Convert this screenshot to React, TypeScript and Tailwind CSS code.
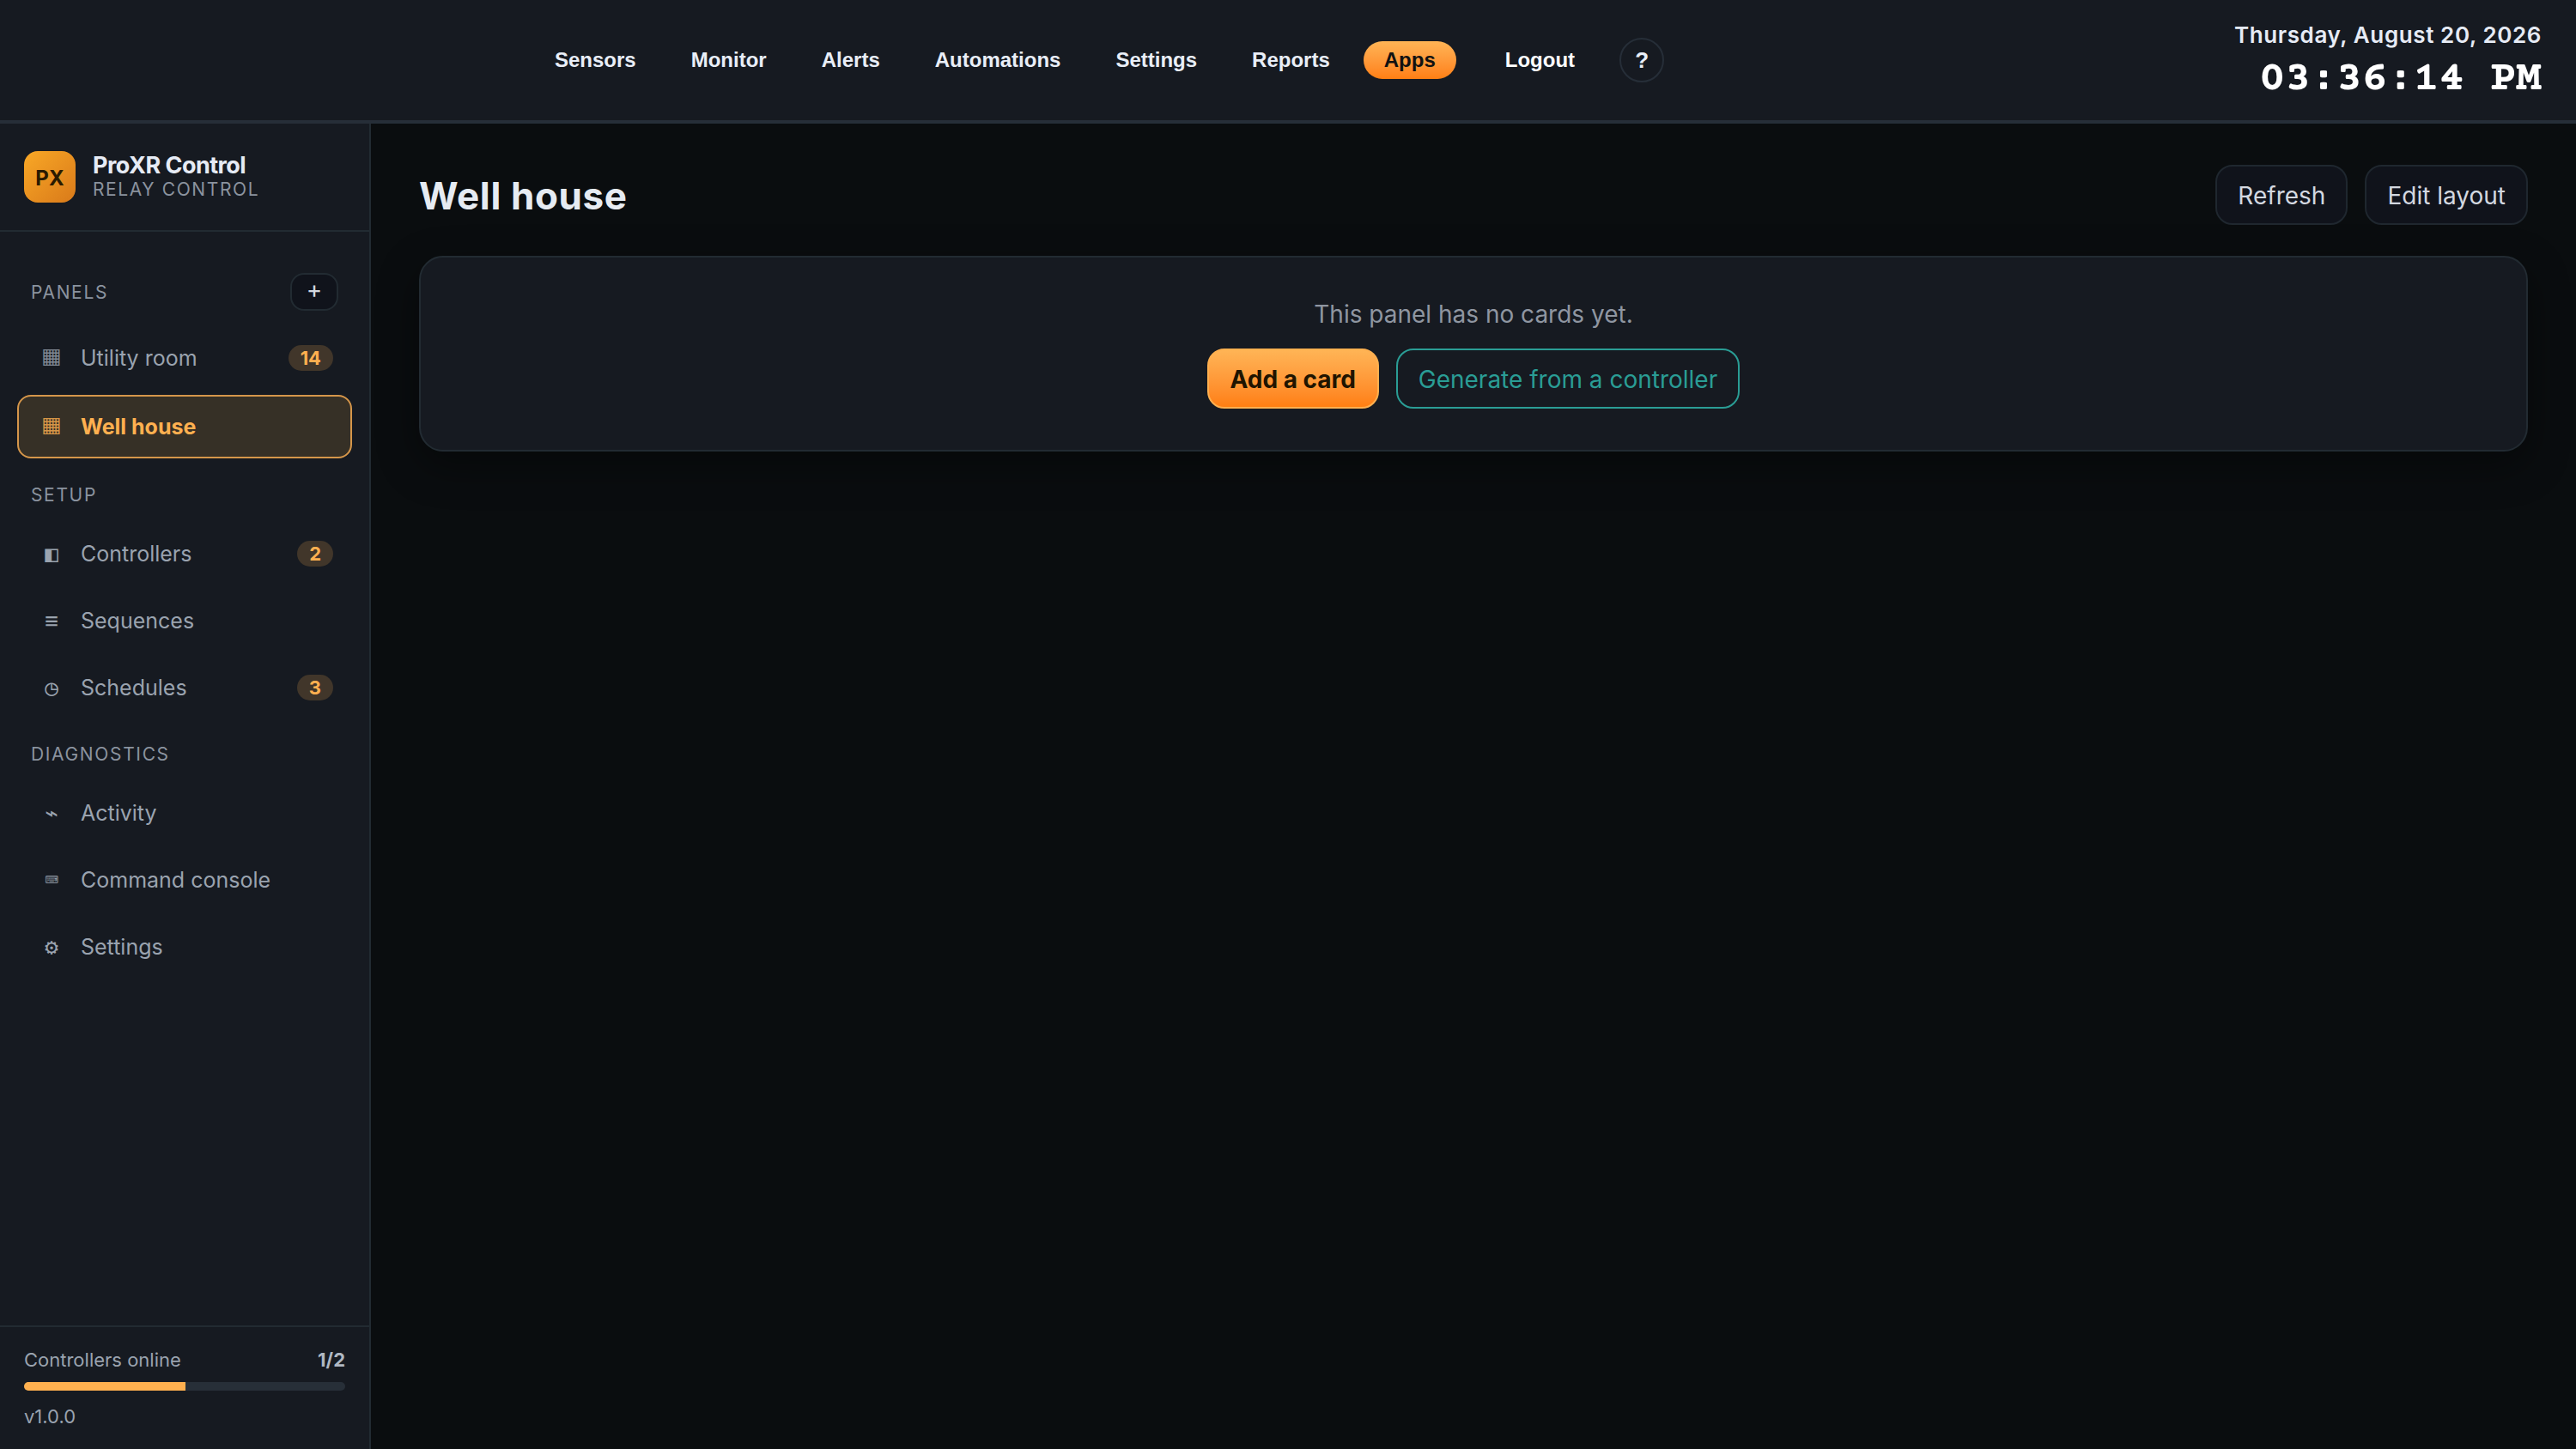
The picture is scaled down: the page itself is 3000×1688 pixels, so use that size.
const navLinks = ['Sensors', 'Monitor', 'Alerts', 'Automations', 'Settings', 'Reports', 'Apps'];

type Item = {
  icon: string;
  label: string;
  badge?: number;
  wide?: boolean;
};

const panels: Item[] = [
  { icon: '▦', label: 'Utility room', badge: 14, wide: true },
  { icon: '▦', label: 'Well house', wide: true },
];

const setup: Item[] = [
  { icon: '◧', label: 'Controllers', badge: 2 },
  { icon: '≡', label: 'Sequences' },
  { icon: '◷', label: 'Schedules', badge: 3 },
];

const diagnostics: Item[] = [
  { icon: '⌁', label: 'Activity' },
  { icon: '⌨', label: 'Command console' },
  { icon: '⚙', label: 'Settings' },
];

function TopBar() {
  return (
    <header className="flex h-36 shrink-0 items-center justify-between border-b-4 border-[#262e38] bg-[#161a21] pr-10 pl-[622px]">
      <nav className="flex items-center font-['Liberation_Sans',sans-serif] text-[24px] font-bold text-[#e9eef7]">
        <div className="flex items-center gap-4">
          {navLinks.map((link) => (
            <a
              key={link}
              className={`flex h-11 items-center rounded-full px-6 ${
                link === 'Apps' ? '-ml-px bg-linear-to-b from-[#ffb455] to-[#ff7f11] text-[#111111]' : ''
              }`}
            >
              {link}
            </a>
          ))}
        </div>
        <a className="ml-[33px] px-6 text-white">Logout</a>
        <button className="ml-7 flex size-[52px] items-center justify-center rounded-full border-2 border-[#262e38] text-[26px]">
          ?
        </button>
      </nav>

      {/* Date and clock */}
      <div className="flex flex-col items-end pt-1 whitespace-nowrap">
        <div className="text-[26px] leading-8 font-semibold tracking-[0.6px] text-[#e6ebf5]">Thursday, August 20, 2026</div>
        <div className="pt-2.5 font-['Courier_Prime','Liberation_Mono',monospace] text-[50px] leading-[52px] font-bold tracking-[-0.1px] text-white">
          03:36:14 PM
        </div>
      </div>
    </header>
  );
}

function NavItem({ item, active }: { item: Item; active?: boolean }) {
  return (
    <a
      className={`flex h-[74px] items-center gap-4 rounded-2xl border-2 px-5 text-[25px] ${
        active ? 'border-[#d5964a] bg-[#363026] font-bold text-[#ffb050]' : 'border-transparent text-[#9aa3af]'
      }`}
    >
      <span
        className={`w-9 text-center font-normal ${
          item.wide
            ? "pb-1 font-['DejaVu_Sans',sans-serif] text-[25px] opacity-80"
            : "font-['DejaVu_Sans_Mono',monospace] text-[26px]"
        }`}
      >
        {item.icon}
      </span>
      <span className="flex-1 pt-0.5">{item.label}</span>
      {item.badge && (
        <span className="flex h-[30px] items-center rounded-full bg-[#41362a] px-3.5 text-[22px] font-bold text-[#ffb050]">
          {item.badge}
        </span>
      )}
    </a>
  );
}

function Sidebar() {
  return (
    <aside className="flex w-[432px] shrink-0 flex-col border-r-2 border-[#222b32] bg-[#161a21]">
      {/* Brand */}
      <div className="flex h-[126px] items-center gap-5 border-b-2 border-[#222b32] px-7">
        <div className="flex size-[60px] items-center justify-center rounded-2xl bg-linear-135 from-[#f9a826] to-[#d97a1a] pt-1 text-[24px] font-bold text-[#2a1a00]">
          PX
        </div>
        <div>
          <div className="text-[27px] leading-[30px] font-bold tracking-[-0.54px] text-[#e6ebf5]">ProXR Control</div>
          <div className="text-[21px] leading-[26px] tracking-[1.6px] text-[#8b939f]">RELAY CONTROL</div>
        </div>
      </div>

      <div className="flex-1 px-5 pt-12">
        <div className="flex h-11 items-center justify-between px-4">
          <span className="pt-0.5 text-[21px] tracking-[1.65px] text-[#8b939f]">PANELS</span>
          <button className="flex h-11 w-14 items-center justify-center rounded-2xl border-2 border-[#222b32] bg-[#10131b] pb-1.5 text-[28px] text-[#d3d8e0]">
            +
          </button>
        </div>
        <div className="mt-[18px] flex flex-col gap-1.5">
          {panels.map((item) => (
            <NavItem key={item.label} item={item} active={item.label === 'Well house'} />
          ))}
        </div>

        <div className="mt-[29px] mb-[17px] pl-4 text-[21px] leading-7 tracking-[1.65px] text-[#8b939f]">SETUP</div>
        <div className="flex flex-col gap-1">
          {setup.map((item) => (
            <NavItem key={item.label} item={item} />
          ))}
        </div>

        <div className="mt-[27px] mb-[17px] pl-4 text-[21px] leading-7 tracking-[1.65px] text-[#8b939f]">DIAGNOSTICS</div>
        <div className="flex flex-col gap-1">
          {diagnostics.map((item) => (
            <NavItem key={item.label} item={item} />
          ))}
        </div>
      </div>

      {/* Controller status */}
      <div className="h-36 border-t-2 border-[#222b32] px-7 pt-6 text-[22px] leading-7 text-[#9aa3af]">
        <div className="flex justify-between">
          <span>Controllers online</span>
          <span className="font-bold text-[#b0b8c3]">1/2</span>
        </div>
        <div className="mt-3 h-2.5 overflow-hidden rounded-full bg-[#272f38]">
          <div className="h-full w-[188px] bg-[#ffb04f]" />
        </div>
        <div className="mt-4">v1.0.0</div>
      </div>
    </aside>
  );
}

export default function App() {
  return (
    <div className="flex h-[1688px] w-[3000px] flex-col overflow-hidden bg-[#0a0d0f] font-['Inter',sans-serif]">
      <TopBar />
      <div className="flex flex-1">
        <Sidebar />
        <main className="flex-1 px-14 pt-12">
          <div className="flex h-[70px] items-center justify-between">
            <h1 className="pt-0.5 text-[44px] font-bold tracking-[0.6px] text-[#e6ebf2]">Well house</h1>
            <div className="flex gap-5 text-[28px] text-[#d3d8e0]">
              <button className="h-[70px] rounded-[20px] border-2 border-[#1f272f] bg-[#10131b] px-6 pt-0.5">Refresh</button>
              <button className="h-[70px] rounded-[20px] border-2 border-[#1f272f] bg-[#10131b] px-6 pt-0.5">Edit layout</button>
            </div>
          </div>

          {/* Empty state */}
          <section className="mt-9 flex h-[228px] flex-col items-center rounded-[28px] border-2 border-[#222b32] bg-[#161a21] pt-[46px] text-[28px] shadow-[0_16px_48px_rgba(0,0,0,0.4)]">
            <p className="leading-10 text-[#8f96a1]">This panel has no cards yet.</p>
            <div className="mt-5 flex gap-5">
              <button className="h-[70px] w-[200px] rounded-[20px] border-2 border-[#ffb050] bg-linear-to-b from-[#ffb455] to-[#ff7f11] pt-0.5 font-bold text-[#201400]">
                Add a card
              </button>
              <button className="h-[70px] rounded-[20px] border-2 border-[#2a9d95] px-6 pt-0.5 text-[#2a9d95]">
                Generate from a controller
              </button>
            </div>
          </section>
        </main>
      </div>
    </div>
  );
}
